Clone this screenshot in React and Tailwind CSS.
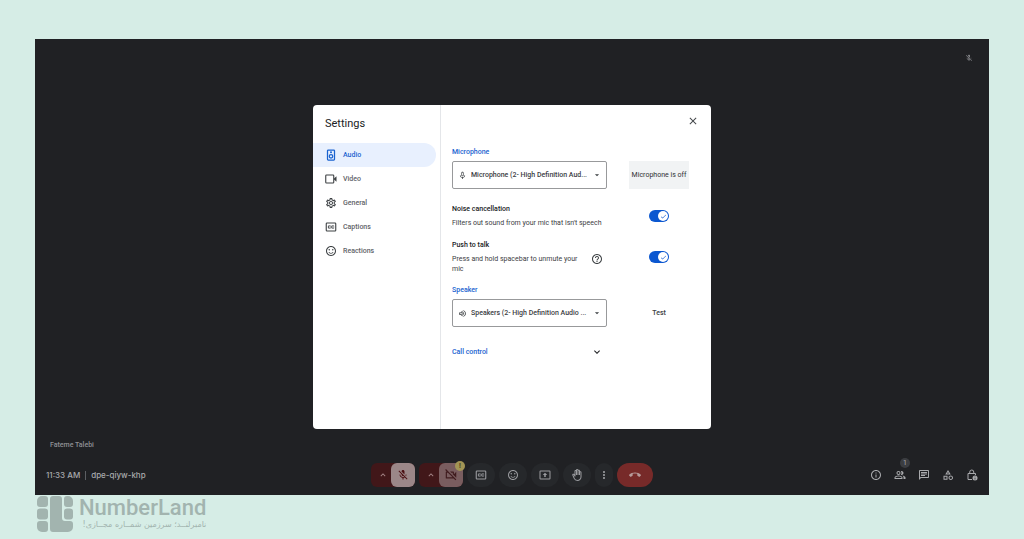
import {
  MdArrowDropDown, MdCallEnd, MdCheck, MdClose, MdExpandLess, MdExpandMore, MdHelpOutline,
  MdInfoOutline, MdMicNone, MdMicOff, MdMoreVert, MdOutlineBackHand, MdOutlineCategory,
  MdOutlineChat, MdOutlinePeopleAlt, MdOutlineSentimentSatisfiedAlt,
  MdOutlineSettings, MdOutlineVideocamOff, MdOutlineVolumeUp,
} from "react-icons/md";

function SpeakerIcon({ className }) {
  return (
    <svg viewBox="0 0 24 24" fill="none" stroke="currentColor" strokeWidth="2.500" className={className}>
      <rect x="5" y="2" width="14" height="20" rx="1.500" />
      <circle cx="12" cy="14.500" r="3.500" />
      <circle cx="12" cy="6.700" r="2" fill="currentColor" stroke="none" />
    </svg>
  );
}

function VideoIcon({ className }) {
  return (
    <svg viewBox="0 0 24 24" fill="none" stroke="currentColor" strokeWidth="2.200" className={className}>
      <rect x="1.500" y="4" width="16" height="16" rx="1.500" />
      <path d="M18 11l5-4.500v11L18 13z" fill="currentColor" stroke="none" />
    </svg>
  );
}

function CaptionsIcon({ className }) {
  return (
    <svg viewBox="0 0 24 24" fill="none" stroke="currentColor" strokeWidth="2.200" className={className}>
      <rect x="2.500" y="4" width="19" height="16" rx="1.500" />
      <path d="M11 10.700V9.800H6.800v4.400H11v-.9M17.700 10.700V9.800h-4.200v4.400h4.200v-.9" strokeWidth="1.800" />
    </svg>
  );
}

const tabs = [
  { label: "Audio", Icon: SpeakerIcon, active: true },
  { label: "Video", Icon: VideoIcon },
  { label: "General", Icon: MdOutlineSettings },
  { label: "Captions", Icon: CaptionsIcon },
  { label: "Reactions", Icon: MdOutlineSentimentSatisfiedAlt },
];

function Sidebar() {
  return (
    <aside className="w-32 shrink-0 border-r border-[#e4e6e9]">
      <h1 className="px-3 pt-3 pb-3 text-[11px] leading-[14px] text-[#202124]">Settings</h1>
      <nav className="pr-1">
        {tabs.map(({ label, Icon, active }) => (
          <button
            key={label}
            type="button"
            className={`flex h-6 w-full items-center gap-[6px] rounded-r-full pl-3 text-[7px] font-medium ${
              active ? "bg-[#e8f0fe] text-[#1a63d0]" : "text-[#5f6368]"
            }`}
          >
            <Icon className={`size-3 ${active ? "" : "text-[#3c4043]"}`} />
            {label}
          </button>
        ))}
      </nav>
    </aside>
  );
}

function DeviceSelect({ id, label, value, Icon }) {
  return (
    <div>
      <label htmlFor={id} className="block text-[7px] leading-[10px] font-medium text-[#1a63d0]">{label}</label>
      <div className="mt-1 flex h-7 items-center gap-1 rounded-[2px] border border-[#98999b] pr-1 pl-[5px] text-[#3c4043]">
        <Icon className="size-[9px] shrink-0" />
        <select id={id} className="min-w-0 flex-1 appearance-none text-[7px] font-medium outline-none">
          <option>{value}</option>
        </select>
        <MdArrowDropDown className="size-[10px] shrink-0" />
      </div>
    </div>
  );
}

function Toggle({ id }) {
  return (
    <span className="relative flex h-3 w-5 items-center justify-end rounded-full bg-[#0b57d0] pr-px">
      <input id={id} type="checkbox" role="switch" defaultChecked className="absolute inset-0 size-full cursor-pointer opacity-0" />
      <span className="pointer-events-none flex size-[10px] items-center justify-center rounded-full bg-white text-[#0b57d0]">
        <MdCheck className="size-[7px]" />
      </span>
    </span>
  );
}

const row = "grid grid-cols-[155px_60px] gap-x-[22px]";

function SettingsDialog() {
  return (
    <section role="dialog" aria-label="Settings" className="flex min-h-[324px] w-full max-w-[398px] rounded-[4px] bg-white">
      <Sidebar />
      <div className="min-w-0 flex-1 pl-[11px]">
        <div className="flex justify-end pt-[10px] pr-3">
          <button type="button" aria-label="Close" className="text-[#45484c]"><MdClose className="size-3" /></button>
        </div>
        <div className={`${row} mt-5 items-end`}>
          <DeviceSelect id="mic" label="Microphone" value="Microphone (2- High Definition Aud..." Icon={MdMicNone} />
          <div className="flex h-7 items-center justify-center bg-[#f1f3f4] text-[7px] whitespace-nowrap text-[#2e3033]">Microphone is off</div>
        </div>
        <div className={`${row} mt-[15px] items-center`}>
          <label htmlFor="noise" className="text-[7px] leading-[10px] whitespace-nowrap text-[#3c4043]">
            <span className="mb-1 block font-medium text-[#202124]">Noise cancellation</span>
            Filters out sound from your mic that isn't speech
          </label>
          <div className="flex justify-center"><Toggle id="noise" /></div>
        </div>
        <div className={`${row} mt-3 items-center`}>
          <div className="text-[7px] leading-[10px] text-[#3c4043]">
            <label htmlFor="push" className="mb-1 block font-medium text-[#202124]">Push to talk</label>
            <div className="flex items-start justify-between pr-1">
              <p className="w-[132px]">Press and hold spacebar to unmute your mic</p>
              <button type="button" aria-label="Help" className="flex h-[10px] items-center"><MdHelpOutline className="size-3" /></button>
            </div>
          </div>
          <div className="flex justify-center"><Toggle id="push" /></div>
        </div>
        <div className={`${row} mt-[11px] items-end`}>
          <DeviceSelect id="speaker" label="Speaker" value="Speakers (2- High Definition Audio ..." Icon={MdOutlineVolumeUp} />
          <button type="button" className="h-7 text-[7px] font-medium text-[#3c4043]">Test</button>
        </div>
        <div className={`${row} mt-[19px]`}>
          <button type="button" className="flex items-center justify-between pr-1 text-[7px] font-medium text-[#1a63d0]">
            Call control
            <MdExpandMore className="size-3 text-[#202124]" />
          </button>
        </div>
      </div>
    </section>
  );
}

function PresentIcon({ className }) {
  return (
    <svg viewBox="0 0 24 24" fill="currentColor" className={className}>
      <path d="M3 3h18a2 2 0 0 1 2 2v14a2 2 0 0 1-2 2H3a2 2 0 0 1-2-2V5a2 2 0 0 1 2-2Zm0 2v14h18V5H3Z" fillRule="evenodd" />
      <path d="M12 7.500 16.500 12h-3v4h-3v-4h-3Z" />
    </svg>
  );
}

function LockInfoIcon({ className }) {
  return (
    <svg viewBox="0 0 24 24" fill="none" stroke="currentColor" strokeWidth="2" className={className}>
      <path d="M12 21H4V9h15v3M7.500 9V6a4 4 0 0 1 8 0v3" />
      <circle cx="18" cy="18" r="5" fill="currentColor" stroke="none" />
      <path d="M18 17.500v3.500M18 15v1.300" stroke="#202124" strokeWidth="1.300" />
    </svg>
  );
}

const round = "flex h-6 items-center justify-center rounded-full bg-[#26282b] text-[#9b9ca0]";

function CallBar() {
  return (
    <footer className="grid grid-cols-[1fr_auto_1fr] items-center px-[11px] text-[#a9aaad]">
      <div className="flex items-center gap-[5px] font-['Inter',sans-serif] text-[8px] font-medium">
        <span>11:33 AM</span>
        <span className="h-[9px] w-px bg-[#5d5f63]" />
        <span>dpe-qiyw-khp</span>
      </div>
      <div className="flex items-center gap-1">
        <div className="flex rounded-[6px] bg-[#411719]">
          <button type="button" aria-label="Audio settings" className="flex h-6 w-5 items-center justify-center pl-1 text-[#a8898a]"><MdExpandLess className="size-[10px]" /></button>
          <button type="button" aria-label="Turn on microphone" className="flex size-6 items-center justify-center rounded-[6px] bg-[#9b8788] text-[#4c1013]"><MdMicOff className="size-3" /></button>
        </div>
        <div className="relative flex rounded-[6px] bg-[#411719]">
          <button type="button" aria-label="Video settings" className="flex h-6 w-5 items-center justify-center pl-1 text-[#a8898a]"><MdExpandLess className="size-[10px]" /></button>
          <button type="button" aria-label="Turn on camera" className="flex size-6 items-center justify-center rounded-[6px] bg-[#795d5f] text-[#401c1f]"><MdOutlineVideocamOff className="size-[14px]" /></button>
          <span className="absolute -top-[2px] -right-[2px] flex size-[10px] items-center justify-center rounded-full bg-[#a29555] text-[7px] font-bold text-[#4a421b]">!</span>
        </div>
        <button type="button" aria-label="Captions" className={`${round} w-7`}><CaptionsIcon className="size-3" /></button>
        <button type="button" aria-label="Send a reaction" className={`${round} w-7`}><MdOutlineSentimentSatisfiedAlt className="size-3" /></button>
        <button type="button" aria-label="Present now" className={`${round} w-7`}><PresentIcon className="size-3" /></button>
        <button type="button" aria-label="Raise hand" className={`${round} w-7`}><MdOutlineBackHand className="size-3" /></button>
        <button type="button" aria-label="More options" className={`${round} w-[18px]`}><MdMoreVert className="size-3" /></button>
        <button type="button" aria-label="Leave call" className="flex h-6 w-9 items-center justify-center rounded-full bg-[#772a29] text-[#b79b9b]"><MdCallEnd className="size-3" /></button>
      </div>
      <div className="flex justify-end gap-3">
        <button type="button" aria-label="Meeting details"><MdInfoOutline className="size-3" /></button>
        <button type="button" aria-label="People" className="relative">
          <MdOutlinePeopleAlt className="size-3" />
          <span className="absolute -top-[11px] -right-1 flex size-[10px] items-center justify-center rounded-full bg-[#3b3d41] text-[7px]">1</span>
        </button>
        <button type="button" aria-label="Chat"><MdOutlineChat className="size-3" /></button>
        <button type="button" aria-label="Activities"><MdOutlineCategory className="size-3" /></button>
        <button type="button" aria-label="Host controls"><LockInfoIcon className="size-3" /></button>
      </div>
    </footer>
  );
}

function Brand() {
  return (
    <div className="flex items-center gap-[6px] pt-px pl-[2px] text-[#a2b4af]">
      <svg viewBox="0 0 36 36" fill="currentColor" className="size-9">
        <path d="M5 0h3a3 3 0 0 1 3 3v5a3 3 0 0 1-3 3H3a3 3 0 0 1-3-3V5a5 5 0 0 1 5-5Z" />
        <rect y="12.500" width="11" height="11" rx="3" />
        <path d="M3 25h5a3 3 0 0 1 3 3v5a3 3 0 0 1-3 3H5a5 5 0 0 1-5-5v-3a3 3 0 0 1 3-3Z" />
        <path d="M16 0h6a3 3 0 0 1 3 3v19a3 3 0 0 0 3 3h5a3 3 0 0 1 3 3v3a5 5 0 0 1-5 5H16a3 3 0 0 1-3-3V3a3 3 0 0 1 3-3Z" />
        <path d="M30 0h1a5 5 0 0 1 5 5v3a3 3 0 0 1-3 3h-3a3 3 0 0 1-3-3V3a3 3 0 0 1 3-3Z" />
        <rect x="27" y="12.500" width="9" height="11" rx="3" />
      </svg>
      <div>
        <div className="text-[22px] leading-[22px] font-medium">NumberLand</div>
        <div dir="rtl" className="font-['DejaVu_Sans',sans-serif] text-[8px] leading-3">نامبرلنــد؛ سرزمین شمــاره مجــازی!</div>
      </div>
    </div>
  );
}

export default function App() {
  return (
    <div className="flex min-h-screen flex-col bg-[#d6ede6] px-[35px] pt-[39px] font-['Roboto',sans-serif]">
      <main className="flex flex-1 flex-col bg-[#202124]">
        <div className="flex h-[66px] justify-end px-4 pt-[15px] text-[#85868a]"><MdMicOff className="size-2" /></div>
        <div className="flex justify-center"><SettingsDialog /></div>
        <p className="mt-auto mb-[13px] pl-[15px] text-[7px] leading-[10px] font-medium text-[#8f9094]">Fateme Talebi</p>
        <div className="pb-2"><CallBar /></div>
      </main>
      <div className="h-11"><Brand /></div>
    </div>
  );
}
